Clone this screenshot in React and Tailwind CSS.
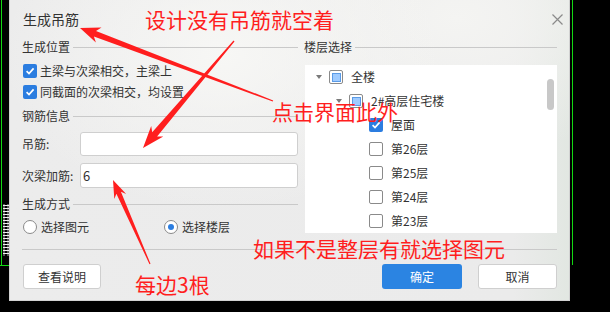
import React from "react";

const RED = "#ff1e1e";

// tapered brush-style arrow: (x1,y1) is the tail, (x2,y2) the tip
function arrowPoints(x1, y1, x2, y2, headLen, headHalf, neck, tail) {
  const dx = x1 - x2;
  const dy = y1 - y2;
  const len = Math.hypot(dx, dy);
  const ux = dx / len;
  const uy = dy / len;
  const nx = -uy;
  const ny = ux;
  const p = (a, b) => `${a.toFixed(1)},${b.toFixed(1)}`;
  const hx = x2 + ux * headLen;
  const hy = y2 + uy * headLen;
  const kx = x2 + ux * (headLen - 4);
  const ky = y2 + uy * (headLen - 4);
  return [
    p(x2, y2),
    p(hx + nx * headHalf, hy + ny * headHalf),
    p(kx + nx * neck, ky + ny * neck),
    p(x1 + nx * tail, y1 + ny * tail),
    p(x1 - nx * tail, y1 - ny * tail),
    p(kx - nx * neck, ky - ny * neck),
    p(hx - nx * headHalf, hy - ny * headHalf),
  ].join(" ");
}

function GroupTitle({ children }) {
  return (
    <div className="flex h-[18px] items-center gap-[3px]">
      <span className="whitespace-nowrap">{children}</span>
      <div className="h-px flex-1 bg-[#c9c9c9]" />
    </div>
  );
}

function Check({ state }) {
  if (state === "on") {
    return (
      <span className="flex size-[14px] shrink-0 items-center justify-center rounded-[2px] bg-[#2b7de0]">
        <svg width="10" height="10" viewBox="0 0 10 10">
          <path d="M1.6 5.2 4 7.6 8.6 2.4" fill="none" stroke="white" strokeWidth="1.7" />
        </svg>
      </span>
    );
  }
  if (state === "part") {
    return (
      <span className="flex size-[14px] shrink-0 items-center justify-center rounded-[2px] border border-[#8a8a8a] bg-white">
        <span className="size-[9px] border border-[#5b9be6] bg-[#9fcbff]" />
      </span>
    );
  }
  return <span className="size-[14px] shrink-0 rounded-[2px] border border-[#8a8a8a] bg-white" />;
}

function Radio({ on }) {
  return (
    <span className="flex size-[14px] shrink-0 items-center justify-center rounded-full border border-[#8a8a8a] bg-white">
      {on && <span className="size-[6px] rounded-full bg-[#2b7de0]" />}
    </span>
  );
}

function TreeRow({ level, arrow, state, label }) {
  const spacer = ["w-0", "w-[20px]", "w-[40px]"][level];
  return (
    <div className="flex h-[24px] items-center">
      <div className={spacer} />
      <div className="flex w-[24px] items-center">
        {arrow && (
          <span className="mb-[1px] ml-[11px] h-0 w-0 border-x-[3px] border-t-[4px] border-x-transparent border-t-[#7a7a7a]" />
        )}
      </div>
      <Check state={state} />
      <span className="ml-[8px] whitespace-nowrap">{label}</span>
    </div>
  );
}

const floors = [
  { level: 0, arrow: true, state: "part", label: "全楼" },
  { level: 1, arrow: true, state: "part", label: "2#高层住宅楼" },
  { level: 2, state: "on", label: "屋面" },
  { level: 2, state: "off", label: "第26层" },
  { level: 2, state: "off", label: "第25层" },
  { level: 2, state: "off", label: "第24层" },
  { level: 2, state: "off", label: "第23层" },
];

export default function App() {
  return (
    <div className="relative h-[312px] w-[610px] overflow-hidden bg-black font-['Noto_Sans_CJK_SC',sans-serif] text-[12px] text-[#333]">
      {/* CAD drawing behind the dialog */}
      <div className="absolute left-[1px] top-0 h-[265px] w-px bg-[#12d812]" />
      <div className="absolute left-0 top-[265px] h-px w-[10px] bg-[#12d812]" />
      <div className="absolute left-[572px] top-0 h-[265px] w-px bg-[#12d812]" />
      <svg className="absolute left-[3px] top-[204px]" width="6" height="52" viewBox="0 0 6 52">
        <path d="M1 0V52M5 0V52" stroke="#d8d8d8" strokeWidth="0.8" />
        {Array.from({ length: 17 }, (_, i) => (
          <path key={i} d={`M0 ${i * 3 + 1.5}H6`} stroke="#f0f0f0" strokeWidth="1" />
        ))}
      </svg>

      <div className="relative ml-[9px] flex h-[301px] w-[561px] flex-col border-x border-b border-[#d2d2d2] bg-[#e9e9e9] bg-[radial-gradient(ellipse_at_38%_18%,#f7f7f5_0%,transparent_45%),radial-gradient(ellipse_at_80%_6%,#f4f4f2_0%,transparent_35%),linear-gradient(90deg,#ececec_0%,#ebebeb_90%,#e2e7e2_100%)] px-[12px]">
        <div className="flex h-[38px] items-center justify-between">
          <span className="pl-px text-[14px]">生成吊筋</span>
          <svg className="mr-[-6px]" width="11" height="11" viewBox="0 0 11 11">
            <path d="M0.5 0.5 10.5 10.5M10.5 0.5 0.5 10.5" stroke="#8a8a8a" strokeWidth="1.2" />
          </svg>
        </div>

        <div className="flex h-[199px] gap-[6px]">
          <div className="flex w-[276px] flex-col">
            <GroupTitle>生成位置</GroupTitle>
            <div className="flex flex-col pt-[4px]">
              <label className="ml-px flex h-[21px] items-center gap-[3px]">
                <Check state="on" />
                <span>主梁与次梁相交，主梁上</span>
              </label>
              <label className="ml-px flex h-[21px] items-center gap-[3px]">
                <Check state="on" />
                <span>同截面的次梁相交，均设置</span>
              </label>
            </div>
            <div className="mt-[5px]">
              <GroupTitle>钢筋信息</GroupTitle>
            </div>
            <div className="mt-[7px] flex h-[24px] items-center">
              <span className="w-[58px]">吊筋:</span>
              <div className="h-full flex-1 rounded-[3px] border border-[#cfcfcf] bg-white" />
            </div>
            <div className="mt-[7px] flex h-[25px] items-center">
              <span className="w-[58px]">次梁加筋:</span>
              <div className="flex h-full flex-1 items-center rounded-[3px] border border-[#cfcfcf] bg-white pl-[2px] text-[13px]">
                6
              </div>
            </div>
            <div className="mt-[7px]">
              <GroupTitle>生成方式</GroupTitle>
            </div>
            <div className="mt-[4px] flex h-[20px] items-center">
              <label className="ml-px flex w-[141px] items-center gap-[4px]">
                <Radio />
                <span>选择图元</span>
              </label>
              <label className="flex items-center gap-[4px]">
                <Radio on />
                <span>选择楼层</span>
              </label>
            </div>
          </div>

          <div className="flex flex-1 flex-col">
            <GroupTitle>楼层选择</GroupTitle>
            <div className="relative ml-px mt-[9px] h-[168px] overflow-hidden bg-white">
              {floors.map((f) => (
                <TreeRow key={f.label} {...f} />
              ))}
              <div className="absolute right-[3px] top-[14px] h-[31px] w-[7px] rounded-full bg-[#c8c8c8]" />
            </div>
          </div>
        </div>

        <div className="mt-[12px] h-px bg-[#c9c9c9]" />

        <div className="mt-[14px] flex h-[25px] items-center">
          <button className="ml-px h-full w-[78px] rounded-[3px] border border-[#cfcfcf] bg-white" type="button">
            查看说明
          </button>
          <button className="ml-auto h-full w-[80px] rounded-[3px] bg-[#2b84e2] text-white" type="button">
            确定
          </button>
          <button className="ml-[16px] h-full w-[79px] rounded-[3px] border border-[#cfcfcf] bg-white" type="button">
            取消
          </button>
        </div>
      </div>

      {/* red annotations drawn over the screenshot */}
      <svg className="pointer-events-none absolute inset-0" width="610" height="312" viewBox="0 0 610 312">
        <polygon points={arrowPoints(273, 101, 80, 28, 20, 8, 3, 0.6)} fill={RED} />
        <polygon points={arrowPoints(234, 41, 143, 148, 22, 8, 3.2, 0.6)} fill={RED} />
        <polygon points={arrowPoints(150, 264, 113, 180, 18, 6.5, 2.5, 0.5)} fill={RED} />
      </svg>
      <span className="absolute left-[145px] top-[9px] whitespace-nowrap text-[21px] leading-none text-[#ff1e1e]">
        设计没有吊筋就空着
      </span>
      <span className="absolute left-[272px] top-[101px] whitespace-nowrap text-[21px] leading-none text-[#ff1e1e]">
        点击界面此外
      </span>
      <span className="absolute left-[253px] top-[238px] whitespace-nowrap text-[21px] leading-none text-[#ff1e1e]">
        如果不是整层有就选择图元
      </span>
      <span className="absolute left-[135px] top-[274px] whitespace-nowrap text-[21px] leading-none text-[#ff1e1e]">
        每边3根
      </span>
    </div>
  );
}
